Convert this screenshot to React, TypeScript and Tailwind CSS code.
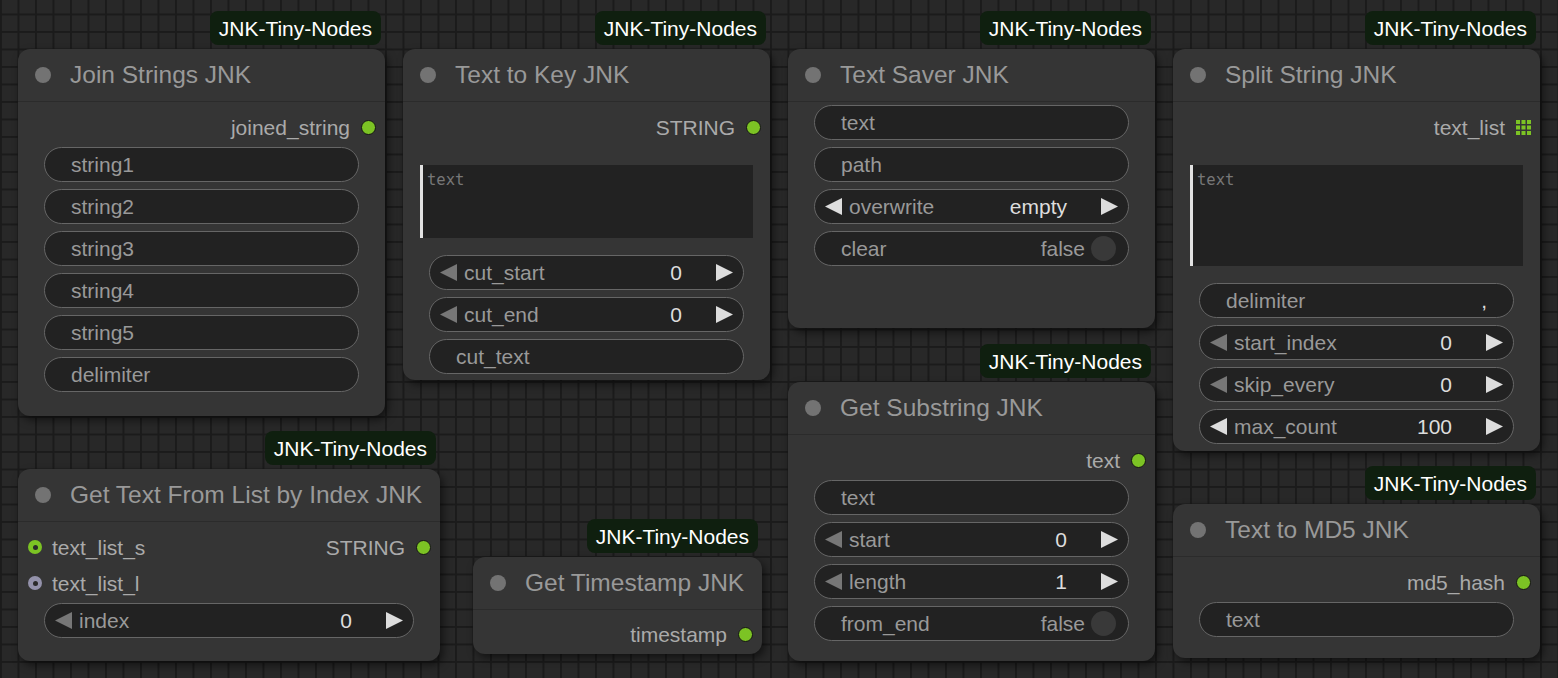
import React from "react";

type NodeProps = {
  x: number;
  y: number;
  w: number;
  h: number;
  title: string;
  children?: React.ReactNode;
};

function Node({ x, y, w, h, title, children }: NodeProps) {
  return (
    <div
      className="absolute rounded-[12px] bg-[#353535] shadow-[3px_4px_8px_rgba(0,0,0,0.55)]"
      style={{ left: x, top: y, width: w, height: h }}
    >
      <div className="absolute right-[4px] bottom-[calc(100%+4px)] h-[34px] px-[9px] rounded-[8px] bg-[#0f1f0f] text-white text-[21px] leading-none flex items-center whitespace-nowrap">
        JNK-Tiny-Nodes
      </div>
      <div className="h-[53px] flex items-center border-b border-[#2b2b2b]">
        <div className="ml-[17px] w-[16px] h-[16px] rounded-full bg-[#737373]" />
        <span className="ml-[19px] text-[24.5px] leading-none text-[#999] whitespace-nowrap">{title}</span>
      </div>
      {children}
    </div>
  );
}

function Dot() {
  return <div className="w-[15px] h-[15px] rounded-full bg-[#7cc324] border-[1.5px] border-[#141414]" />;
}

function InDot({ color }: { color: string }) {
  return (
    <div className={`w-[14px] h-[14px] rounded-full flex items-center justify-center ${color}`}>
      <div className="w-[5px] h-[5px] rounded-full bg-[#2a2a2a]" />
    </div>
  );
}

function ListIcon() {
  return (
    <svg width="15" height="15" viewBox="0 0 15 15">
      {[0, 5.5, 11].map((cx) =>
        [0, 5.5, 11].map((cy) => <rect key={`${cx}-${cy}`} x={cx} y={cy} width="4" height="4" fill="#7cc324" />)
      )}
    </svg>
  );
}

function SlotRow({ input, output, icon }: { input?: React.ReactNode; output?: string; icon?: React.ReactNode }) {
  return (
    <div className="h-[36px] flex items-center pl-[10px] pr-[9px] text-[21px] leading-none text-[#aaa]">
      {input}
      {output && (
        <div className="ml-auto flex items-center gap-[11px]">
          <span>{output}</span>
          {icon ?? <Dot />}
        </div>
      )}
    </div>
  );
}

function Arrow({ dir, on }: { dir: "left" | "right"; on: boolean }) {
  return (
    <svg width="17" height="17" viewBox="0 0 17 17" className="shrink-0">
      <polygon points={dir === "left" ? "17,0 17,17 0,8.5" : "0,0 0,17 17,8.5"} fill={on ? "#dddddd" : "#777777"} />
    </svg>
  );
}

const pill = "h-[35px] rounded-full bg-[#222] border border-[#666] flex items-center text-[21px] leading-none";

function TextW({ label, value }: { label: string; value?: string }) {
  return (
    <div className={`${pill} pl-[26px] pr-[26px]`}>
      <span className="text-[#999]">{label}</span>
      {value && <span className="ml-auto text-[#ddd]">{value}</span>}
    </div>
  );
}

function NumW({ label, value, leftOn = false }: { label: string; value: string; leftOn?: boolean }) {
  return (
    <div className={`${pill} pl-[10px] pr-[10px]`}>
      <Arrow dir="left" on={leftOn} />
      <span className="ml-[7px] text-[#999]">{label}</span>
      <span className="ml-auto text-[#ddd]">{value}</span>
      <div className="ml-[34px] flex">
        <Arrow dir="right" on />
      </div>
    </div>
  );
}

function ToggleW({ label, value }: { label: string; value: string }) {
  return (
    <div className={`${pill} pl-[26px] pr-[12px]`}>
      <span className="text-[#999]">{label}</span>
      <span className="ml-auto text-[#999]">{value}</span>
      <div className="ml-[6px] w-[25px] h-[25px] rounded-full bg-[#393939]" />
    </div>
  );
}

function TextArea({ h }: { h: string }) {
  return (
    <div className={`mx-[17px] mt-[20px] ${h} bg-[#222] border-l-[3px] border-[#e2e2e2] px-[4px] pt-[5px] font-['DejaVu_Sans_Mono',monospace] text-[15.5px] leading-[20px] text-[#777]`}>
      text
    </div>
  );
}

export default function App() {
  return (
    <div className="relative w-[1558px] h-[678px] overflow-hidden bg-[#282828] bg-[linear-gradient(to_right,#1b1b1b_2px,transparent_2px),linear-gradient(to_bottom,#1b1b1b_2px,transparent_2px)] bg-[size:17.5px_17.5px] bg-[position:0px_-4px] font-['Liberation_Sans',Arial,sans-serif]">
      <Node x={18} y={49} w={367} h={367} title="Join Strings JNK">
        <div className="pt-[7px]">
          <SlotRow output="joined_string" />
        </div>
        <div className="mt-[2px] px-[26px] flex flex-col gap-[7px]">
          <TextW label="string1" />
          <TextW label="string2" />
          <TextW label="string3" />
          <TextW label="string4" />
          <TextW label="string5" />
          <TextW label="delimiter" />
        </div>
      </Node>

      <Node x={403} y={49} w={367} h={331} title="Text to Key JNK">
        <div className="pt-[7px]">
          <SlotRow output="STRING" />
        </div>
        <TextArea h="h-[73px]" />
        <div className="mt-[17px] px-[26px] flex flex-col gap-[7px]">
          <NumW label="cut_start" value="0" />
          <NumW label="cut_end" value="0" />
          <TextW label="cut_text" />
        </div>
      </Node>

      <Node x={788} y={49} w={367} h={279} title="Text Saver JNK">
        <div className="mt-[3px] px-[26px] flex flex-col gap-[7px]">
          <TextW label="text" />
          <TextW label="path" />
          <NumW label="overwrite" value="empty" leftOn />
          <ToggleW label="clear" value="false" />
        </div>
      </Node>

      <Node x={1173} y={49} w={367} h={402} title="Split String JNK">
        <div className="pt-[7px]">
          <SlotRow output="text_list" icon={<ListIcon />} />
        </div>
        <TextArea h="h-[101px]" />
        <div className="mt-[17px] px-[26px] flex flex-col gap-[7px]">
          <TextW label="delimiter" value="," />
          <NumW label="start_index" value="0" />
          <NumW label="skip_every" value="0" />
          <NumW label="max_count" value="100" leftOn />
        </div>
      </Node>

      <Node x={18} y={469} w={422} h={192} title="Get Text From List by Index JNK">
        <div className="pt-[7px]">
          <SlotRow
            input={
              <div className="flex items-center gap-[10px]">
                <InDot color="bg-[#7cc324]" />
                <span>text_list_s</span>
              </div>
            }
            output="STRING"
          />
          <SlotRow
            input={
              <div className="flex items-center gap-[10px]">
                <InDot color="bg-[#9492ab]" />
                <span>text_list_l</span>
              </div>
            }
          />
        </div>
        <div className="mt-[2px] px-[26px] flex flex-col gap-[7px]">
          <NumW label="index" value="0" />
        </div>
      </Node>

      <Node x={473} y={557} w={289} h={97} title="Get Timestamp JNK">
        <div className="pt-[6px]">
          <SlotRow output="timestamp" />
        </div>
      </Node>

      <Node x={788} y={382} w={367} h={279} title="Get Substring JNK">
        <div className="pt-[7px]">
          <SlotRow output="text" />
        </div>
        <div className="mt-[2px] px-[26px] flex flex-col gap-[7px]">
          <TextW label="text" />
          <NumW label="start" value="0" />
          <NumW label="length" value="1" />
          <ToggleW label="from_end" value="false" />
        </div>
      </Node>

      <Node x={1173} y={504} w={367} h={154} title="Text to MD5 JNK">
        <div className="pt-[7px]">
          <SlotRow output="md5_hash" />
        </div>
        <div className="mt-[2px] px-[26px] flex flex-col gap-[7px]">
          <TextW label="text" />
        </div>
      </Node>
    </div>
  );
}
